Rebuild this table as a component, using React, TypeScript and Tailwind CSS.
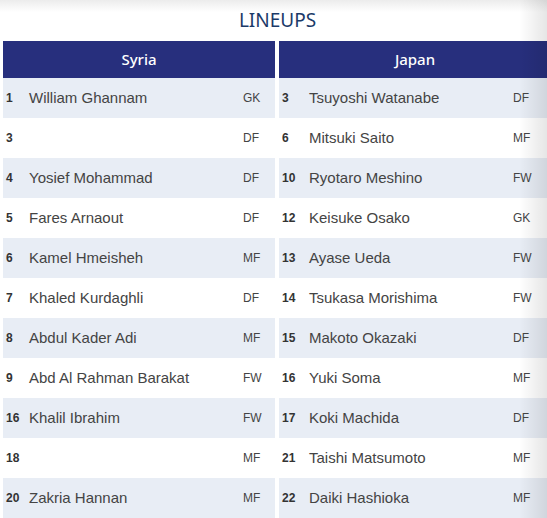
const syria = [
  { no: "1", name: "William Ghannam", pos: "GK" },
  { no: "3", name: "", pos: "DF" },
  { no: "4", name: "Yosief Mohammad", pos: "DF" },
  { no: "5", name: "Fares Arnaout", pos: "DF" },
  { no: "6", name: "Kamel Hmeisheh", pos: "MF" },
  { no: "7", name: "Khaled Kurdaghli", pos: "DF" },
  { no: "8", name: "Abdul Kader Adi", pos: "MF" },
  { no: "9", name: "Abd Al Rahman Barakat", pos: "FW" },
  { no: "16", name: "Khalil Ibrahim", pos: "FW" },
  { no: "18", name: "", pos: "MF" },
  { no: "20", name: "Zakria Hannan", pos: "MF" },
];

const japan = [
  { no: "3", name: "Tsuyoshi Watanabe", pos: "DF" },
  { no: "6", name: "Mitsuki Saito", pos: "MF" },
  { no: "10", name: "Ryotaro Meshino", pos: "FW" },
  { no: "12", name: "Keisuke Osako", pos: "GK" },
  { no: "13", name: "Ayase Ueda", pos: "FW" },
  { no: "14", name: "Tsukasa Morishima", pos: "FW" },
  { no: "15", name: "Makoto Okazaki", pos: "DF" },
  { no: "16", name: "Yuki Soma", pos: "MF" },
  { no: "17", name: "Koki Machida", pos: "DF" },
  { no: "21", name: "Taishi Matsumoto", pos: "MF" },
  { no: "22", name: "Daiki Hashioka", pos: "MF" },
];

type Player = { no: string; name: string; pos: string };

function TeamTable({
  team,
  players,
  noWidth,
  posWidth,
}: {
  team: string;
  players: Player[];
  noWidth: string;
  posWidth: string;
}) {
  return (
    <div className="w-[272px] shrink-0">
      <div className="flex h-[37px] items-center justify-center bg-[#272f7d] font-['Noto_Sans',sans-serif] text-[15px] font-medium text-white">
        {team}
      </div>
      {players.map((p, i) => (
        <div
          key={i}
          className={`flex h-10 items-center ${i % 2 === 0 ? "bg-[#e8edf5]" : "bg-white"}`}
        >
          <span className={`${noWidth} pl-[3px] text-[12px] font-bold text-[#333]`}>{p.no}</span>
          <span className="flex-1 text-[15px] text-[#444]">{p.name}</span>
          <span className={`${posWidth} text-[12px] text-[#444]`}>{p.pos}</span>
        </div>
      ))}
    </div>
  );
}

export default function App() {
  return (
    <div className="relative h-[518px] w-[547px] overflow-hidden bg-white font-['Liberation_Sans',Arial,sans-serif]">
      <div className="pointer-events-none absolute inset-x-0 top-0 h-3 bg-gradient-to-b from-[#ececec] to-white/0" />
      <div className="flex h-[41px] items-center justify-center pb-[1px] pl-[8px] font-['Noto_Sans',sans-serif] text-[19px] text-[#1b3a68]">
        LINEUPS
      </div>
      <div className="flex gap-1 pl-[3px]">
        <TeamTable team="Syria" players={syria} noWidth="w-[26px]" posWidth="w-[32px]" />
        <TeamTable team="Japan" players={japan} noWidth="w-[30px]" posWidth="w-[38px]" />
      </div>
      <div className="pointer-events-none absolute inset-y-0 right-0 w-7 bg-gradient-to-r from-black/0 to-black/10" />
    </div>
  );
}
